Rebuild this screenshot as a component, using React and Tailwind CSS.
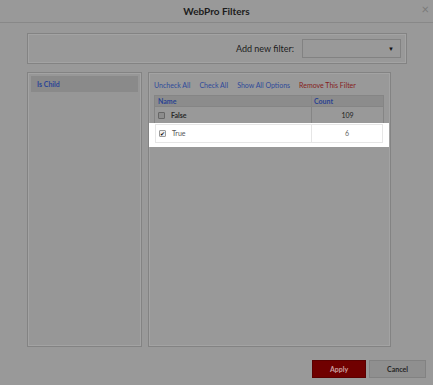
import React from "react";

export default function App() {
  const font = { fontFamily: "Lato, 'Open Sans', 'Liberation Sans', sans-serif" };
  return (
    <div className="w-[433px] h-[385px] bg-[#999999] overflow-hidden flex flex-col" style={font}>
      {/* header */}
      <div className="relative h-[23px] shrink-0 border-b border-[#888888] flex items-center justify-center">
        <span className="text-[10px] font-bold text-[#1c1c1c] leading-none">WebPro Filters</span>
        <span className="absolute right-[4px] top-[3px] text-[13px] leading-none text-[#7a7a7a]">×</span>
      </div>

      {/* add filter bar */}
      <div className="mt-[10px] ml-[27px] w-[380px] h-[31px] shrink-0 border border-[#838383] shadow-[inset_0_0_0_1px_#a3a3a3] flex items-center justify-end pr-[5px] gap-[8px]">
        <span className="text-[9px] text-[#1c1c1c] leading-none">Add new filter:</span>
        <div className="w-[99px] h-[19px] border border-[#828282] flex items-center justify-end pr-[6px]">
          <span className="text-[6px] leading-none text-[#111111]">▼</span>
        </div>
      </div>

      {/* panels */}
      <div className="mt-[8px] ml-[27px] flex gap-[6px] h-[275px] shrink-0">
        <div className="w-[115px] h-full border border-[#838383] shadow-[inset_0_0_0_1px_#a3a3a3] p-[3px] bg-[#979797]">
          <div className="h-[16px] bg-[#8a8a8a] flex items-center pl-[6px]">
            <span className="text-[7px] font-bold text-[#2c4596] leading-none">Is Child</span>
          </div>
        </div>
        <div className="w-[243px] h-full border border-[#838383] shadow-[inset_0_0_0_1px_#a3a3a3] px-[5px] pt-[6px]">
          <div className="flex items-center gap-[9px] h-[12px] text-[7px] leading-none">
            <span className="text-[#2f4a99]">Uncheck All</span>
            <span className="text-[#2f4a99]">Check All</span>
            <span className="text-[#2f4a99]">Show All Options</span>
            <span className="text-[#862020]">Remove This Filter</span>
          </div>
          <div className="mt-[4px] w-[230px] border border-[#858585]">
            <div className="grid grid-cols-[156px_1fr] h-[11px] bg-[#8c8c8c] border-b border-[#858585]">
              <div className="flex items-center pl-[3px] text-[7px] font-bold text-[#2a4392] leading-none">Name</div>
              <div className="flex items-center pl-[2px] border-l border-[#858585] text-[7px] font-bold text-[#2a4392] leading-none">Count</div>
            </div>
            <div className="grid grid-cols-[156px_1fr] h-[17px]">
              <div className="flex items-center pl-[3px] gap-[6px]">
                <div className="w-[7px] h-[7px] border border-[#666666] bg-[#8c8c8c] rounded-[1px]" />
                <span className="text-[7px] font-bold text-[#2a2a2a] leading-none">False</span>
              </div>
              <div className="flex items-center justify-center border-l border-[#858585] text-[7px] text-[#222222] leading-none">109</div>
            </div>
            <div className="relative grid grid-cols-[156px_1fr] h-[19px]">
              <div className="absolute left-[-6px] right-[-6px] top-[-1px] bottom-[-4px] bg-white" />
              <div className="relative flex items-center pl-[3px] gap-[6px] border-t border-l border-b border-[#e6e6e6]">
                <div className="w-[7px] h-[7px] border border-[#9a9a9a] bg-[#f0f0f0] rounded-[1px] flex items-center justify-center text-[6px] leading-none text-[#111111]">✔</div>
                <span className="text-[7px] text-[#555555] leading-none">True</span>
              </div>
              <div className="relative flex items-center justify-center border border-[#e6e6e6] text-[7px] text-[#666666] leading-none">6</div>
            </div>
          </div>
        </div>
      </div>

      {/* footer */}
      <div className="mt-[13px] flex justify-end gap-[3px] pr-[7px]">
        <div className="w-[54px] h-[18px] bg-[#700000] border border-[#5a0000] flex items-center justify-center text-[7px] font-bold text-[#c9a0a0] leading-none">Apply</div>
        <div className="w-[57px] h-[18px] bg-[#8f8f8f] border border-[#828282] flex items-center justify-center text-[7px] font-bold text-[#262626] leading-none">Cancel</div>
      </div>
    </div>
  );
}
